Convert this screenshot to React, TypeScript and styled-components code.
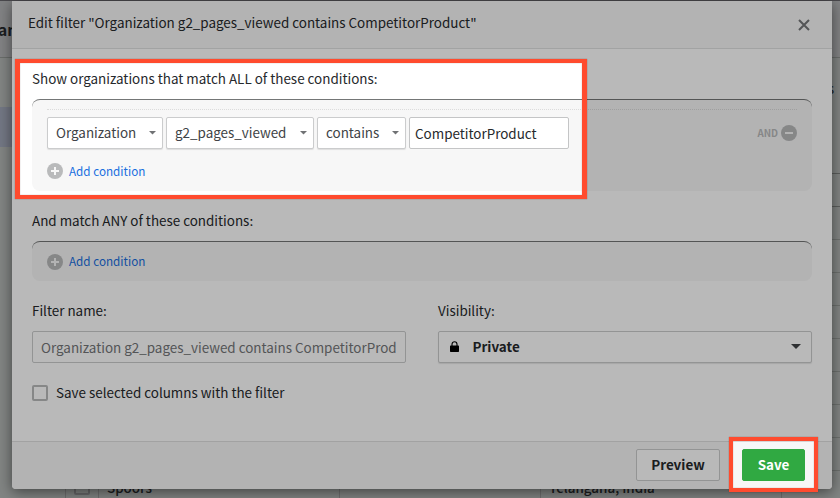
import React from "react";
import styled, { createGlobalStyle, css } from "styled-components";

const Global = createGlobalStyle`
  *, *::before, *::after { box-sizing: border-box; }
  body { margin: 0; overflow: hidden; background: #afb4b1; }
  body, input, button {
    font-family: "Noto Sans CJK SC", "Noto Sans", sans-serif;
    font-size: 13.43px;
    color: #26292c;
  }
`;

const Stage = styled.div`
  position: relative;
  width: 840px;
  height: 498px;
  overflow: hidden;
`;

/* Page behind the dialog */
const Page = styled.div`
  position: absolute;
  inset: 0;
  display: grid;
  grid-template-rows: 58px 1fr;
  background: #b3b7b5;
`;

const PageBar = styled.div`
  display: flex;
  align-items: center;
  background: #b3b4b6;
  border-bottom: 1px solid #929693;
  border-top: 1px solid #66646a;
  font-size: 15.6px;
  font-weight: 700;
  text-indent: -2px;
`;

const PageBody = styled.div`
  display: flex;
  justify-content: space-between;
  min-height: 0;
`;

const SideNav = styled.div`
  width: 12px;
  padding-top: 49px;
`;

const SideItem = styled.div`
  height: 40px;
  background: #9fa5b6;
`;

const Grid = styled.div`
  display: flex;
  flex-direction: column;
  width: 775px;
`;

const GridHead = styled.div`
  flex: none;
  height: 116px;
  border-bottom: 1px solid #7f8280;
  padding: 20px 6px 0 0;
  text-align: right;
`;

const GridRow = styled.div<{ $strong?: boolean }>`
  flex: none;
  display: grid;
  grid-template-columns: 33px 241px 201px 241px 1fr;
  height: 33px;
  border-bottom: 1px solid ${(p) => (p.$strong ? "#7f8280" : "#979b98")};
`;

const GridCell = styled.div`
  display: flex;
  align-items: center;
  padding-left: 8px;
  border-left: 1px solid #999;
  font-weight: 500;
  white-space: nowrap;
`;

const Box = styled.span`
  display: block;
  flex: none;
  width: 16px;
  height: 16px;
  border: 2px solid #b9babb;
  border-radius: 2px;
`;

const GridBox = styled(Box)`
  border-color: #8f9092;
`;

/* Dialog */
const Dialog = styled.section`
  position: absolute;
  left: 12px;
  top: 1px;
  width: 820px;
  height: 488px;
  display: flex;
  flex-direction: column;
  background: #fff;
  border-radius: 0 0 4px 4px;
  box-shadow: 0 3px 14px rgba(0, 0, 0, 0.5);
`;

const Header = styled.header`
  display: flex;
  align-items: center;
  justify-content: space-between;
  height: 48px;
  padding: 0 21px 5px 16px;
  background: #f7f7f7;
  border-bottom: 1px solid #e0e1e1;

  svg {
    margin-top: 6px;
  }
`;

const Body = styled.div`
  flex: 1;
  padding: 20px 20px 0;
`;

const Label = styled.div`
  height: 20px;
  line-height: 18px;
  white-space: nowrap;
`;

const Panel = styled.div`
  margin: 10px 0 20px;
  padding: 0 15px;
  background: #f7f7f7;
  border-top: 1px solid #747676;
  border-radius: 8px;
`;

const Conditions = styled.div`
  display: flex;
  gap: 3px;
  margin-top: 9px;
  padding-top: 7px;
  border-top: 1px dotted #dcdcdc;
`;

const field = css`
  height: 32px;
  background: #fff;
  border: 1px solid #cbcccd;
  border-radius: 2px;
`;

const Select = styled.div<{ $width?: number }>`
  ${field}
  display: flex;
  align-items: center;
  justify-content: space-between;
  width: ${(p) => p.$width}px;
  padding: 0 6px 3px 8px;
  color: #404346;
  box-shadow: 0 1px 1px rgba(0, 0, 0, 0.1);

  svg {
    margin-top: 3px;
  }
`;

const Input = styled.input<{ $width: number; $muted?: boolean }>`
  ${field}
  width: ${(p) => p.$width}px;
  padding: 0 ${(p) => (p.$muted ? 8 : 5)}px 1px;
  outline: none;
  color: ${(p) => (p.$muted ? "#747678" : "#26292c")};
  border-color: ${(p) => (p.$muted ? "#cbcccd" : "#c4c5c6")};
`;

const AndTag = styled.div`
  display: flex;
  align-items: center;
  gap: 3px;
  margin-left: auto;
  font-size: 9.8px;
  font-weight: 700;
  color: #b9babb;
`;

const AddRow = styled.div<{ $tall?: boolean }>`
  display: flex;
  align-items: center;
  gap: 6px;
  height: ${(p) => (p.$tall ? 42 : 39)}px;
  padding-top: ${(p) => (p.$tall ? 2 : 0)}px;
  font-size: 11.7px;
  color: #1a6fdf;
`;

const AddText = styled.span`
  margin-bottom: 2px;
`;

const Columns = styled.div`
  display: grid;
  grid-template-columns: 374px 374px;
  gap: 32px;
`;

const Stack = styled.div`
  display: flex;
  flex-direction: column;
  gap: 10px;
`;

const Visibility = styled.div`
  ${field}
  display: flex;
  align-items: center;
  padding: 0 10px 1px 11px;
  font-weight: 700;
  box-shadow: 0 1px 1px rgba(0, 0, 0, 0.1);
`;

const VisibilityText = styled.span`
  flex: 1;
  margin: 0 0 2px 13.5px;
`;

const CheckRow = styled.div`
  display: flex;
  align-items: center;
  gap: 8px;
  margin-top: 20px;
  height: 20px;
`;

const CheckText = styled.span`
  margin-bottom: 2px;
`;

const Footer = styled.footer`
  display: flex;
  justify-content: flex-end;
  gap: 22px;
  height: 48px;
  padding: 7px 27px 0;
  background: #f7f7f7;
  border-top: 1px solid #dfe0e0;
  border-radius: 0 0 4px 4px;
`;

const Button = styled.button<{ $primary?: boolean }>`
  width: ${(p) => (p.$primary ? 63 : 84)}px;
  height: 32px;
  padding: 0 0 3px;
  border-radius: 2px;
  border: 1px solid ${(p) => (p.$primary ? "#30a942" : "#cbcccd")};
  background: ${(p) => (p.$primary ? "#30a942" : "#fff")};
  color: ${(p) => (p.$primary ? "#fff" : "#26292c")};
  font-weight: 700;
`;

/* Dimming layer with two cut-outs, and the frames drawn around them */
const Dim = styled.div`
  position: absolute;
  inset: 0;
  background: rgba(0, 0, 0, 0.275);
  clip-path: path(evenodd, "M0 0H840V498H0ZM18 62H584V197H18ZM731 439H816V490H731Z");
`;

const Frame = styled.div<{ $x: number; $y: number; $w: number; $h: number; $b: string }>`
  position: absolute;
  left: ${(p) => p.$x}px;
  top: ${(p) => p.$y}px;
  width: ${(p) => p.$w}px;
  height: ${(p) => p.$h}px;
  border: solid #ff4b2e;
  border-width: ${(p) => p.$b};
  box-shadow: 0 0 1px rgba(90, 30, 20, 0.6), inset 0 0 1px rgba(90, 60, 60, 0.7);
`;

const Caret = ({ w = 7, color = "#707274" }: { w?: number; color?: string }) => (
  <svg width={w} height={w / 2} viewBox="0 0 8 4">
    <path d="M0 0H8L4 4Z" fill={color} />
  </svg>
);

const Circle = ({ plus }: { plus?: boolean }) => (
  <svg width="16" height="16" viewBox="0 0 16 16">
    <circle cx="8" cy="8" r="8" fill="#b9babb" />
    <path d={plus ? "M4 8H12M8 4V12" : "M4 8H12"} stroke="#f7f7f7" strokeWidth="2" />
  </svg>
);

const Close = () => (
  <svg width="14" height="14" viewBox="0 0 14 14">
    <path d="M2 2L12 12M12 2L2 12" stroke="#747678" strokeWidth="2" />
  </svg>
);

const Lock = () => (
  <svg width="9" height="11" viewBox="0 0 9 11">
    <path d="M2 5V3.2a2.5 2.5 0 0 1 5 0V5" fill="none" stroke="#000" strokeWidth="1.1" />
    <rect y="4.6" width="9" height="6.4" rx="0.7" fill="#000" />
  </svg>
);

const AddCondition = ({ tall }: { tall?: boolean }) => (
  <AddRow $tall={tall}>
    <Circle plus />
    <AddText>Add condition</AddText>
  </AddRow>
);

export default function App() {
  return (
    <Stage>
      <Global />
      <Page>
        <PageBar>an</PageBar>
        <PageBody>
          <SideNav>
            <SideItem />
          </SideNav>
          <Grid>
            <GridHead>s</GridHead>
            {Array.from({ length: 10 }, (_, i) => (
              <GridRow key={i} $strong={i === 0}>
                <GridCell>{i === 9 && <GridBox />}</GridCell>
                <GridCell>{i === 9 && "Spoors"}</GridCell>
                <GridCell />
                <GridCell>{i === 9 && "Telangana, India"}</GridCell>
                <GridCell />
              </GridRow>
            ))}
          </Grid>
        </PageBody>
      </Page>
      <Dialog>
        <Header>
          <span>Edit filter "Organization g2_pages_viewed contains CompetitorProduct"</span>
          <Close />
        </Header>
        <Body>
          <Label>Show organizations that match ALL of these conditions:</Label>
          <Panel>
            <Conditions>
              <Select $width={116}>Organization<Caret /></Select>
              <Select $width={148}>g2_pages_viewed<Caret /></Select>
              <Select $width={89}>contains<Caret /></Select>
              <Input $width={160} defaultValue="CompetitorProduct" />
              <AndTag>AND<Circle /></AndTag>
            </Conditions>
            <AddCondition tall />
          </Panel>
          <Label>And match ANY of these conditions:</Label>
          <Panel>
            <AddCondition />
          </Panel>
          <Columns>
            <Stack>
              <Label>Filter name:</Label>
              <Input $width={374} $muted defaultValue="Organization g2_pages_viewed contains CompetitorProd" />
            </Stack>
            <Stack>
              <Label>Visibility:</Label>
              <Visibility>
                <Lock />
                <VisibilityText>Private</VisibilityText>
                <Caret w={10} color="#404346" />
              </Visibility>
            </Stack>
          </Columns>
          <CheckRow>
            <Box />
            <CheckText>Save selected columns with the filter</CheckText>
          </CheckRow>
        </Body>
        <Footer>
          <Button>Preview</Button>
          <Button $primary>Save</Button>
        </Footer>
      </Dialog>
      <Dim />
      <Frame $x={15} $y={59} $w={572} $h={140} $b="4px 5px 4px 5px" />
      <Frame $x={729} $y={437} $w={89} $h={55} $b="4px" />
    </Stage>
  );
}
